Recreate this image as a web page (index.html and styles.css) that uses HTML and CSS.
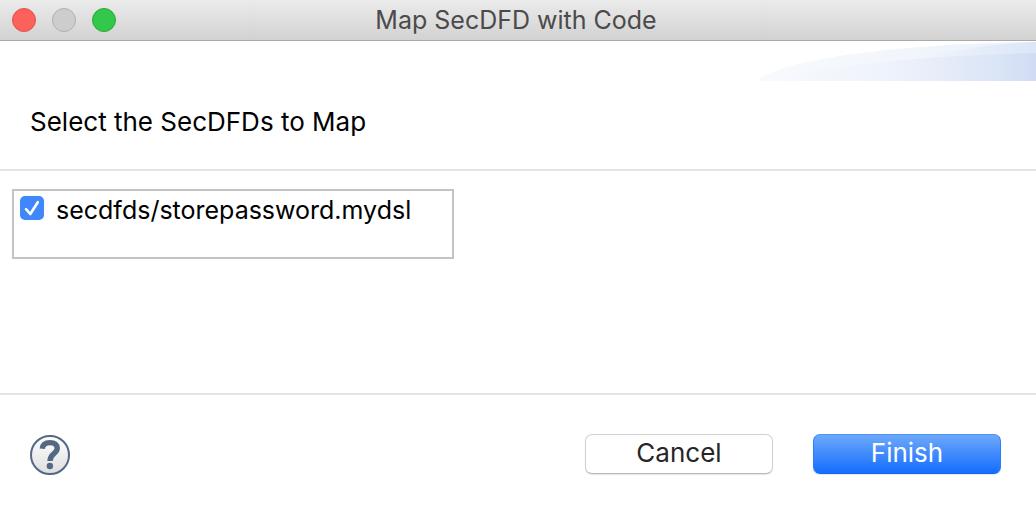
FILE: index.html
```html
<!DOCTYPE html>
<html lang="en">
<head>
<meta charset="utf-8">
<meta name="viewport" content="width=device-width, initial-scale=1">
<title>Map SecDFD with Code</title>
<link rel="stylesheet" href="styles.css">
</head>
<body>
<form class="dialog">
  <header class="titlebar">
    <div class="lights">
      <button type="button" class="light light-close" aria-label="Close"></button>
      <button type="button" class="light light-minimize" aria-label="Minimize" disabled></button>
      <button type="button" class="light light-zoom" aria-label="Zoom"></button>
    </div>
    <h1 class="title">Map SecDFD with Code</h1>
  </header>
  <section class="banner">
    <svg class="swoosh" width="280" height="40" viewBox="0 0 280 40" aria-hidden="true">
      <defs>
        <linearGradient id="outer" x1="0" x2="1" y1="0" y2="0">
          <stop offset="0" stop-color="#f8fafd"/>
          <stop offset="0.5" stop-color="#f2f6fc"/>
          <stop offset="1" stop-color="#eaf1fb"/>
        </linearGradient>
        <linearGradient id="middle" gradientUnits="userSpaceOnUse" x1="170" x2="280" y1="0" y2="0">
          <stop offset="0" stop-color="#eff4fc"/>
          <stop offset="1" stop-color="#dce6f7"/>
        </linearGradient>
        <linearGradient id="inner" gradientUnits="userSpaceOnUse" x1="20" x2="280" y1="0" y2="0">
          <stop offset="0" stop-color="#f7f9fd"/>
          <stop offset="0.4" stop-color="#eff3fc"/>
          <stop offset="0.62" stop-color="#e7ecf9"/>
          <stop offset="0.85" stop-color="#dae5f6"/>
          <stop offset="1" stop-color="#d2dbf4"/>
        </linearGradient>
      </defs>
      <path fill="url(#outer)" d="M2 40C14 23 120 3 280 1V40Z"/>
      <path fill="url(#middle)" d="M160 20C190 10 230 3 280 1V40H160Z"/>
      <path fill="url(#inner)" d="M14 40C60 27 150 15 280 12V40Z"/>
    </svg>
    <h2 class="heading">Select the SecDFDs to Map</h2>
  </section>
  <main class="content">
    <div class="list">
      <label class="item">
        <span class="tick">
          <input type="checkbox" class="checkbox" checked>
          <svg class="mark" width="24" height="24" viewBox="0 0 24 24" aria-hidden="true"><path d="M6 13.2L10.3 18L17.8 6.2"/></svg>
        </span>
        <span>secdfds/storepassword.mydsl</span>
      </label>
    </div>
  </main>
  <footer class="actions">
    <button type="button" class="help" aria-label="Help">
      <svg width="40" height="42" viewBox="0 -2 40 42" aria-hidden="true">
        <defs>
          <linearGradient id="disc" x1="0" x2="0" y1="0" y2="1">
            <stop offset="0" stop-color="#fff"/>
            <stop offset="1" stop-color="#dedede"/>
          </linearGradient>
        </defs>
        <circle cx="20" cy="20" r="19" fill="url(#disc)" stroke="#546785" stroke-width="2"/>
        <path d="M12.3 13.8C12.6 9.4 15.4 7.6 20 7.6C24.8 7.6 27.2 9.8 27.2 13.2C27.2 18.8 20 18.4 20 26" fill="none" stroke="#546785" stroke-width="5.4"/>
        <circle cx="19.9" cy="31" r="3.2" fill="#546785"/>
      </svg>
    </button>
    <button type="button" class="button">Cancel</button>
    <button type="submit" class="button button-primary">Finish</button>
  </footer>
</form>
</body>
</html>
```
FILE: styles.css
```css
* {
  box-sizing: border-box;
}

body {
  margin: 0;
  background: #fff;
  color: #000;
  font-family: Inter, "Liberation Sans", sans-serif;
  font-size: 25px;
  line-height: 32px;
}

button {
  padding: 0;
  border: 0;
  font: inherit;
}

h1,
h2 {
  margin: 0;
  font: inherit;
}

.dialog {
  display: flex;
  flex-direction: column;
  min-height: 100vh;
}

.titlebar {
  display: grid;
  grid-template-columns: 1fr auto 1fr;
  align-items: center;
  padding: 4px 16px 4px 12px;
  border-bottom: 1px solid #a9a9a9;
  background: linear-gradient(#ebebeb, #d2d2d2);
}

.lights {
  display: flex;
  gap: 16px;
}

.light {
  width: 24px;
  height: 24px;
  border: 1px solid;
  border-radius: 50%;
}

.light-close {
  border-color: #e2504c;
  background: #fd615c;
}

.light-minimize {
  border-color: #b0b0b0;
  background: #cdcdcd;
}

.light-zoom {
  border-color: #26ab35;
  background: #34c84a;
}

.title {
  color: #4b4b4b;
}

.banner {
  position: relative;
  padding: 65px 30px 31px;
  border-bottom: 2px solid #e4e4e4;
}

.heading {
  font-size: 26px;
}

.swoosh {
  position: absolute;
  top: 0;
  right: 0;
}

.content {
  flex: 1;
  padding: 18px 12px;
}

.list {
  width: 442px;
  max-width: 100%;
  min-height: 70px;
  padding: 3px 6px;
  border: 2px solid #c3c3c3;
}

.item {
  display: flex;
  align-items: flex-start;
  gap: 12px;
}

.tick {
  display: grid;
  padding-top: 2px;
}

.checkbox,
.mark {
  grid-area: 1 / 1;
}

.checkbox {
  width: 24px;
  height: 24px;
  margin: 0;
  border-radius: 5px;
  appearance: none;
  background: #3e88fb;
}

.mark {
  visibility: hidden;
  fill: none;
  stroke: #fff;
  stroke-width: 2.6;
  stroke-linecap: round;
  stroke-linejoin: round;
  pointer-events: none;
}

.checkbox:checked + .mark {
  visibility: visible;
}

.actions {
  display: flex;
  align-items: center;
  gap: 40px;
  padding: 38px 35px 38px 30px;
  border-top: 2px solid #e4e4e4;
}

.help {
  display: flex;
  margin-right: auto;
  background: none;
}

.button {
  width: 188px;
  height: 40px;
  padding-bottom: 2px;
  border: 1px solid #d0d0d0;
  border-bottom-color: #b8b8b8;
  border-radius: 7px;
  background: #fff;
  box-shadow: 0 1px 1px #0000001a;
  color: #262626;
  font-size: 26px;
}

.button-primary {
  border-color: #4b93f8 #2b7dfa #1168fb;
  background: linear-gradient(#6ea8fa, #146dff);
  color: #fff;
}
```
